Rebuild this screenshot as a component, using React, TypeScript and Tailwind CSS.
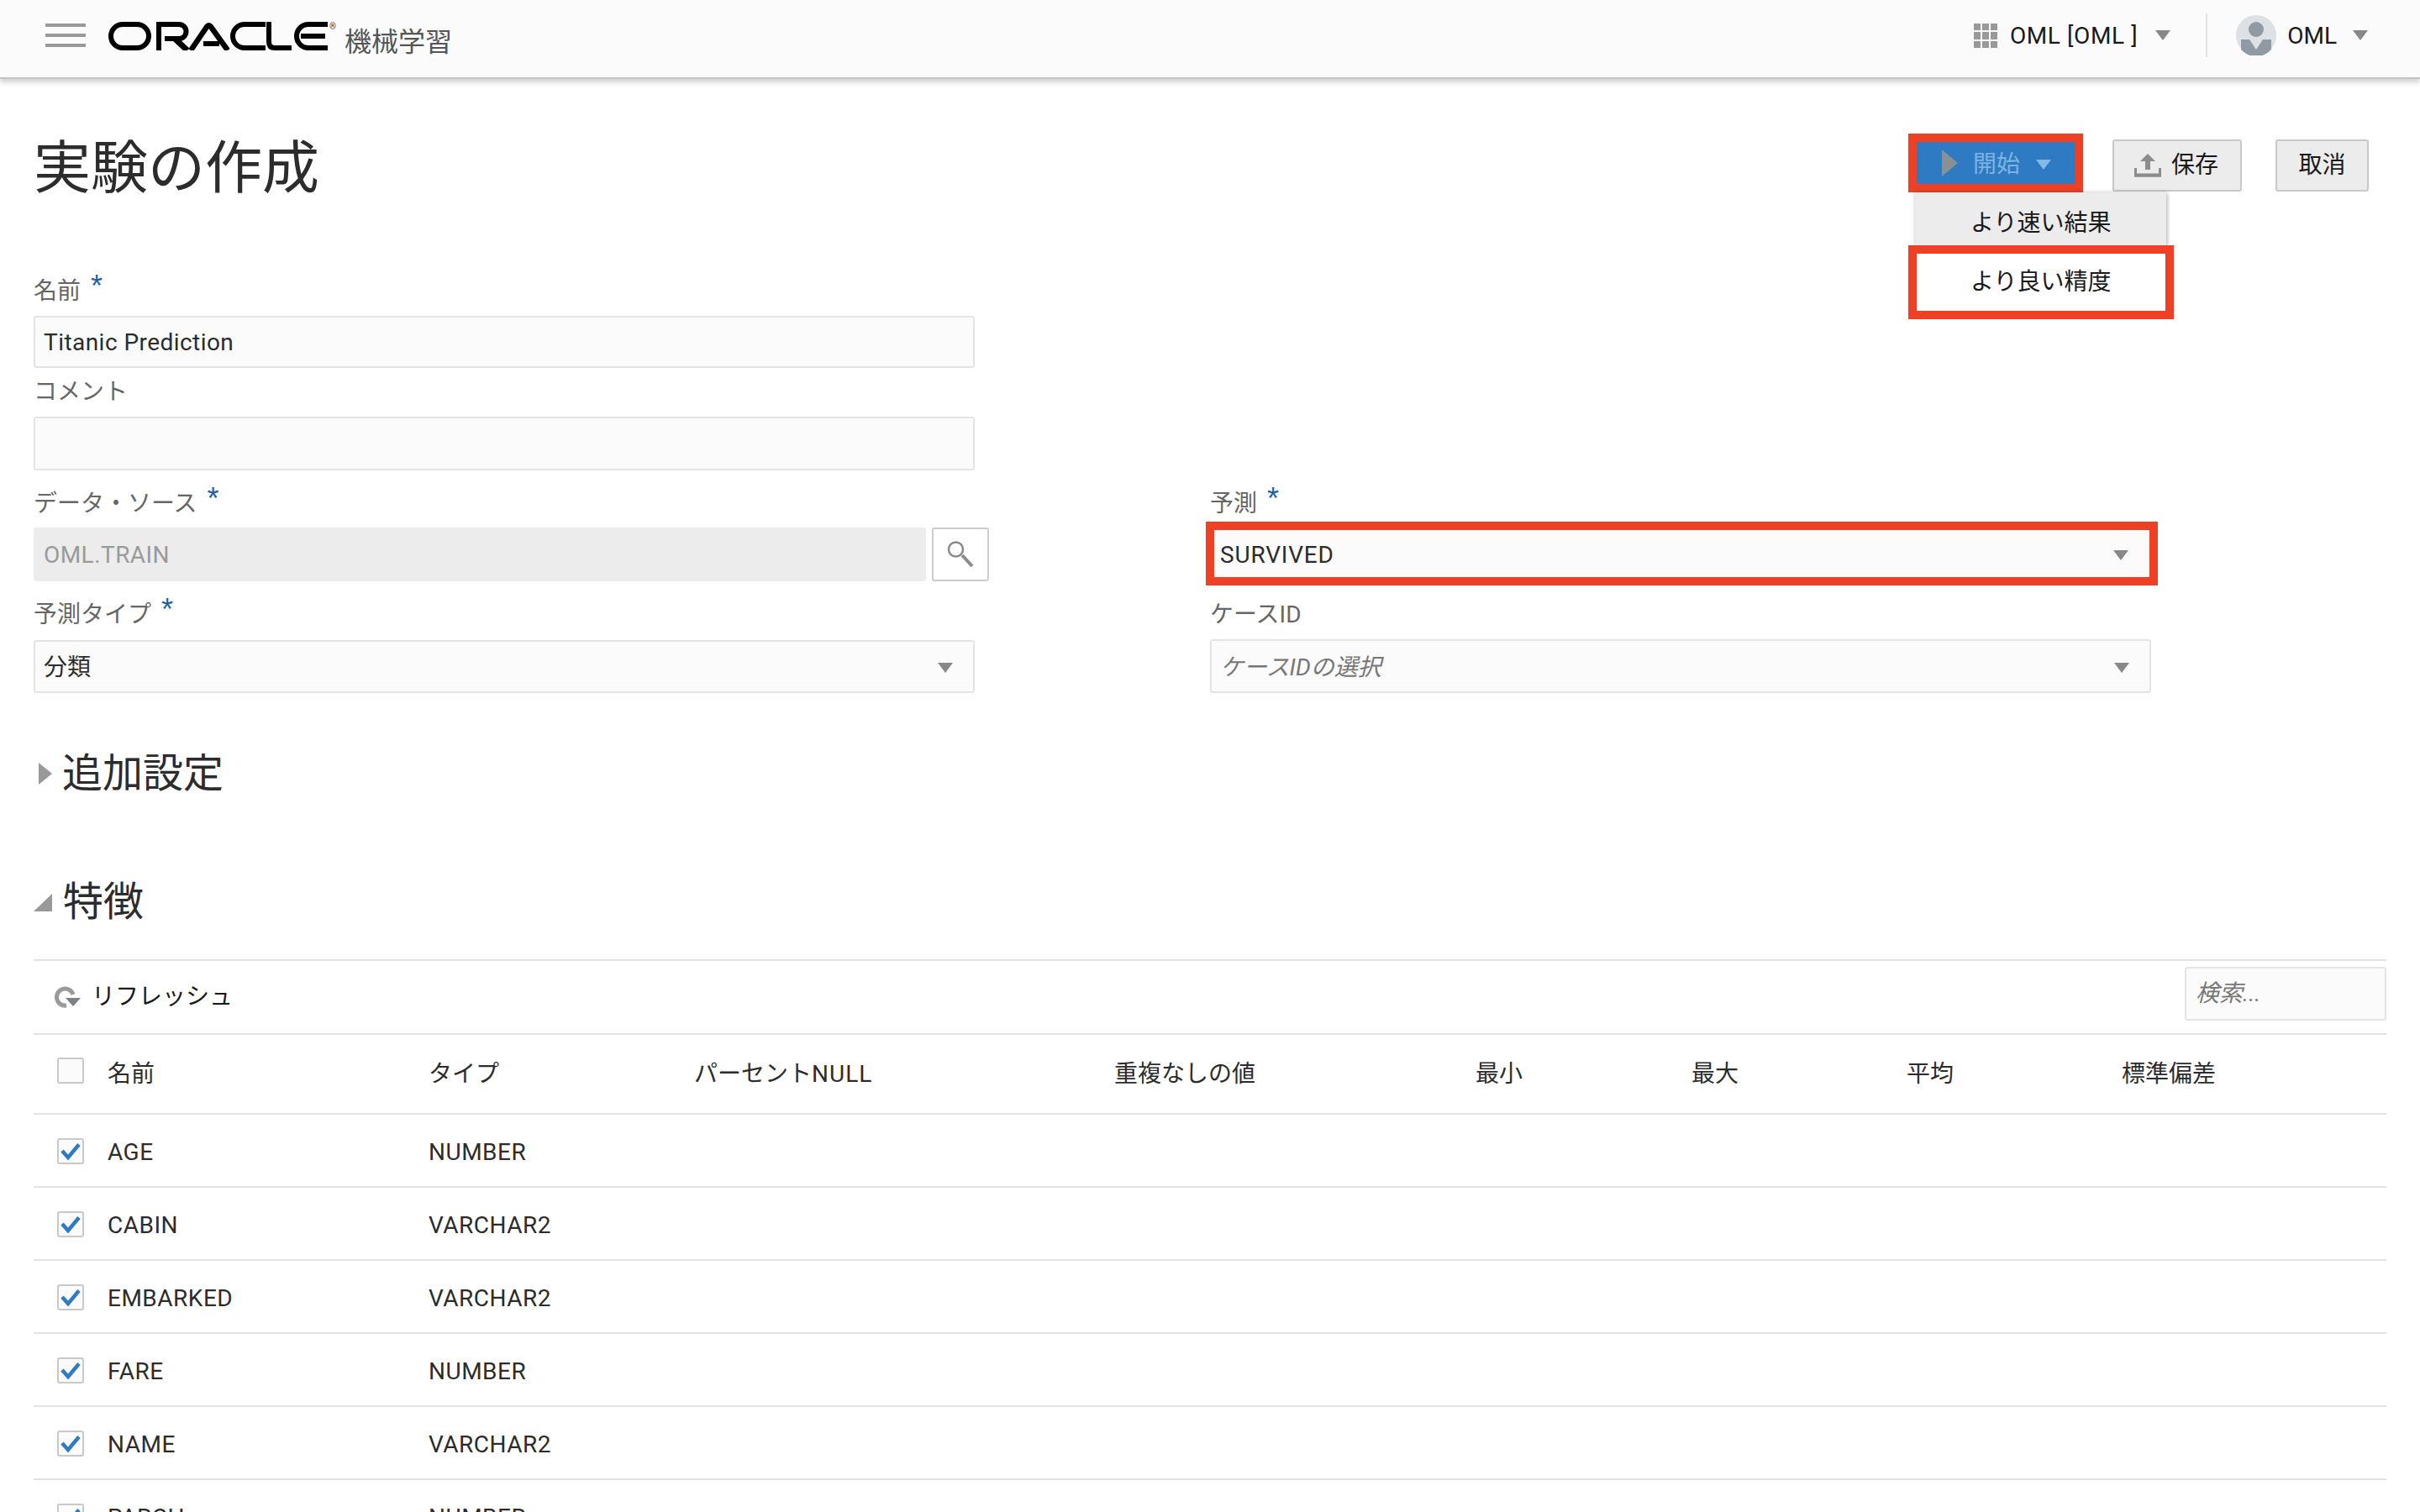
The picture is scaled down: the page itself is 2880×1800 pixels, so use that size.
const font = "font-['Roboto','Noto_Sans_CJK_JP',sans-serif]";

const rows = [
  ["AGE", "NUMBER"],
  ["CABIN", "VARCHAR2"],
  ["EMBARKED", "VARCHAR2"],
  ["FARE", "NUMBER"],
  ["NAME", "VARCHAR2"],
  ["PARCH", "NUMBER"],
];

const Caret = ({ color = "#888888" }: { color?: string }) => (
  <svg width="18" height="12" viewBox="0 0 18 12" className="shrink-0">
    <polygon points="0,0 18,0 9,12" fill={color} />
  </svg>
);

const Star = () => (
  <span className="-mt-[6px] ml-[12px] font-['Liberation_Sans',sans-serif] text-[36px] leading-[36px] text-[#1f5fa8]">
    *
  </span>
);

const OracleLogo = () => (
  <svg width="261" height="34" viewBox="0 0 261 34" fill="none" stroke="#000" strokeWidth="6">
    <rect x="3" y="3" width="45" height="28" rx="14" />
    <path d="M60 34V3H84a8.5 8.5 0 0 1 0 17H67" />
    <path d="M79 20L94 34" strokeWidth="7" />
    <path d="M98 34L117 6Q119.5 2.5 122 6L142 34" strokeWidth="6.5" />
    <path d="M113 26H132" />
    <path d="M187 3H162a14 14 0 0 0 0 28H187" />
    <path d="M191 0V24q0 7 7 7H218" />
    <path d="M261 3H238a14 14 0 0 0 0 28H261" />
    <path d="M229 17H258" />
  </svg>
);

const Check = ({ checked = true }: { checked?: boolean }) => (
  <div className="flex h-[31px] w-[32px] items-center justify-center rounded-[3px] border-2 border-[#c9c9c9] bg-[#fbfbfb]">
    {checked && (
      <svg width="24" height="20" viewBox="0 0 24 20" fill="none" className="shrink-0">
        <path d="M2 9L9 17L22 1.5" stroke="#2e7bc4" strokeWidth="4.5" />
      </svg>
    )}
  </div>
);

const Label = ({ className, text, star }: { className: string; text: string; star?: boolean }) => (
  <div className={`flex items-end text-[28px] leading-[36px] text-[#666666] ${className}`}>
    <div className="flex">
      <span>{text}</span>
      {star && <Star />}
    </div>
  </div>
);

const Field = ({ className, children }: { className: string; children?: React.ReactNode }) => (
  <div
    className={`flex items-center justify-between rounded-[3px] border-2 border-[#e4e4e4] bg-[#fbfbfb] pl-[10px] pr-[24px] pt-[2px] text-[28px] text-[#2c2c2c] ${className}`}
  >
    {children}
  </div>
);

export default function App() {
  return (
    <div className={`h-[1800px] w-[2880px] overflow-hidden bg-white ${font}`}>
      <header className="flex h-[94px] items-center justify-between border-b-2 border-[#c4c4c4] bg-[#fbfbfb] pl-[54px] pr-[62px] shadow-[0_4px_6px_rgba(0,0,0,0.18)]">
        <div className="flex items-center">
          <div className="flex w-[48px] flex-col gap-[8px] pb-[8px]">
            <div className="h-[4px] bg-[#999999]" />
            <div className="h-[4px] bg-[#999999]" />
            <div className="h-[4px] bg-[#999999]" />
          </div>
          <div className="ml-[27px] flex items-start pb-[6px]">
            <OracleLogo />
            <span className="ml-[2px] text-[10px] leading-[12px] text-[#333]">®</span>
          </div>
          <span className="ml-[10px] mt-[8px] text-[32px] leading-[40px] text-[#555555]">機械学習</span>
        </div>
        <div className="flex items-center pb-[8px] text-[28px] leading-[36px] text-[#1a1a1a]">
          <svg width="28" height="29" viewBox="0 0 28 29" fill="#999999">
            <rect x="0" y="0" width="8" height="8" />
            <rect x="10" y="0" width="8" height="8" />
            <rect x="20" y="0" width="8" height="8" />
            <rect x="0" y="10" width="8" height="9" />
            <rect x="10" y="10" width="8" height="9" />
            <rect x="20" y="10" width="8" height="9" />
            <rect x="0" y="21" width="8" height="8" />
            <rect x="10" y="21" width="8" height="8" />
            <rect x="20" y="21" width="8" height="8" />
          </svg>
          <span className="ml-[15px] pt-[2px] tracking-[0.6px]">OML [OML ]</span>
          <span className="ml-[21px]">
            <Caret />
          </span>
          <div className="ml-[42px] h-[52px] w-[2px] bg-[#e2e2e2]" />
          <svg width="48" height="48" viewBox="0 0 48 48" className="ml-[34px]">
            <circle cx="24" cy="24" r="24" fill="#dde0e4" />
            <circle cx="24" cy="17" r="9" fill="#8f9aa5" />
            <path d="M6 29H16L24 41L32 29H42V41A24 24 0 0 1 6 41Z" fill="#8f9aa5" />
          </svg>
          <span className="ml-[13px] pt-[2px]">OML</span>
          <span className="ml-[19px]">
            <Caret />
          </span>
        </div>
      </header>

      <main className="px-[40px]">
        <div className="flex h-[220px] items-start justify-between">
          <h1 className="mt-[67px] text-[68px] font-normal leading-[80px] text-[#2c2c2c]">実験の作成</h1>
          <div className="mr-[21px] mt-[65px] flex items-start text-[28px] text-[#1a1a1a]">
            <div className="relative">
              <div className="flex h-[70px] w-[208px] items-center border-[10px] border-[#ed4024] bg-[#2e7bc4] pl-[30px] text-[#7db3e0]">
                <svg width="19" height="32" viewBox="0 0 19 32">
                  <polygon points="0,0 19,16 0,32" fill="#8a8f94" />
                </svg>
                <span className="ml-[18px] pt-[4px]">開始</span>
                <span className="ml-[19px] pt-[4px]">
                  <Caret color="#82bbe5" />
                </span>
              </div>
              <div className="absolute left-[8px] top-[70px] w-[299px] bg-[#ececec] shadow-[1px_1px_5px_rgba(0,0,0,0.35)]">
                <div className="flex h-[63px] items-center pl-[66px] pt-[10px]">より速い結果</div>
              </div>
              <div className="absolute left-0 top-[133px] flex h-[88px] w-[316px] items-center border-[10px] border-[#ed4024] bg-white pl-[64px]">
                より良い精度
              </div>
            </div>
            <button className="ml-[35px] mt-[7px] flex h-[62px] w-[154px] items-center rounded-[3px] border-2 border-[#c8c8c8] bg-[#ececec] pl-[24px]">
              <svg width="32" height="28" viewBox="0 0 32 28" fill="none">
                <path d="M16 8V19" stroke="#8c8c8c" strokeWidth="6" />
                <polygon points="16,0 25,9 7,9" fill="#8c8c8c" />
                <path d="M1.5 17V26H30.5V17" stroke="#8c8c8c" strokeWidth="3" />
                <path d="M0 25.5H32" stroke="#8c8c8c" strokeWidth="4" />
              </svg>
              <span className="ml-[12px]">保存</span>
            </button>
            <button className="ml-[40px] mt-[7px] flex h-[62px] w-[111px] items-center justify-center rounded-[3px] border-2 border-[#c8c8c8] bg-[#ececec]">
              取消
            </button>
          </div>
        </div>

        <div className="flex h-[511px] items-end">
          <div className="w-[1137px]">
            <Label className="h-[62px] pb-[11px]" text="名前" star />
            <Field className="h-[62px] w-[1120px] tracking-[0.45px]">Titanic Prediction</Field>
            <Label className="h-[58px] pb-[11px]" text="コメント" />
            <Field className="h-[64px] w-[1120px]" />
            <Label className="h-[68px] pb-[10px]" text="データ・ソース" star />
            <div className="flex h-[64px] gap-[7px]">
              <div className="flex w-[1064px] items-center rounded-[3px] bg-[#ececec] pl-[12px] pt-[2px] text-[28px] tracking-[0.45px] text-[#9a9a9a]">
                OML.TRAIN
              </div>
              <div className="flex w-[68px] items-center justify-center rounded-[3px] border-2 border-[#cccccc] bg-white">
                <svg width="34" height="34" viewBox="0 0 34 34" fill="none">
                  <circle cx="11.5" cy="11" r="8.5" stroke="#8a8a8a" strokeWidth="2.5" />
                  <path d="M19 18L31 31" stroke="#8a8a8a" strokeWidth="4" />
                </svg>
              </div>
            </div>
            <Label className="h-[70px] pb-[12px]" text="予測タイプ" star />
            <Field className="h-[63px] w-[1120px]">
              分類
              <Caret />
            </Field>
          </div>
          <div className="ml-[258px] w-[1133px]">
            <Label className="h-[62px] pb-[3px] pl-[5px]" text="予測" star />
            <div className="flex h-[76px] items-center justify-between border-[10px] border-[#ed4024] bg-[#fbfbfb] pl-[7px] pr-[25px] pt-[4px] text-[28px] tracking-[0.8px] text-[#2c2c2c]">
              SURVIVED
              <Caret />
            </div>
            <Label className="h-[64px] pb-[11px] pl-[5px]" text="ケースID" />
            <Field className="ml-[5px] h-[64px] w-[1120px] pt-[4px] italic text-[#777777]">
              ケースIDの選択
              <span className="not-italic">
                <Caret />
              </span>
            </Field>
          </div>
        </div>

        <div className="mt-[58px] flex h-[76px] items-center text-[48px] leading-[60px] text-[#2c2c2c]">
          <svg width="16" height="26" viewBox="0 0 16 26" className="ml-[6px]">
            <polygon points="0,0 16,13 0,26" fill="#999999" />
          </svg>
          <span className="ml-[12px]">追加設定</span>
        </div>
        <div className="mt-[77px] flex h-[76px] items-center text-[48px] leading-[60px] text-[#2c2c2c]">
          <svg width="22" height="21" viewBox="0 0 22 21">
            <polygon points="22,0 22,21 0,21" fill="#999999" />
          </svg>
          <span className="ml-[13px]">特徴</span>
        </div>

        <div className="mt-[30px] flex h-[90px] items-center justify-between border-y-2 border-[#e2e2e2]">
          <div className="ml-[23px] flex items-center text-[28px] text-[#1a1a1a]">
            <svg width="34" height="28" viewBox="0 0 34 28" fill="none">
              <path d="M24 11A10 10 0 1 0 16 24" stroke="#9a9a9a" strokeWidth="5" />
              <polygon points="15,15 33,15 24,25" fill="#7d8287" />
            </svg>
            <span className="ml-[12px]">リフレッシュ</span>
          </div>
          <div className="mb-[9px] flex h-[64px] w-[240px] items-center rounded-[3px] border-2 border-[#e4e4e4] bg-[#fbfbfb] pl-[11px] text-[28px] italic text-[#777777]">
            検索...
          </div>
        </div>

        <div className="flex h-[95px] items-center border-b-2 border-[#e2e2e2] text-[28px] text-[#2c2c2c]">
          <div className="mb-[8px] ml-[28px] w-[60px]">
            <Check checked={false} />
          </div>
          <span className="w-[382px]">名前</span>
          <span className="w-[316px]">タイプ</span>
          <span className="w-[500px]">
            パーセント<span className="tracking-[1px]">NULL</span>
          </span>
          <span className="w-[430px]">重複なしの値</span>
          <span className="w-[257px]">最小</span>
          <span className="w-[256px]">最大</span>
          <span className="w-[256px]">平均</span>
          <span>標準偏差</span>
        </div>

        {rows.map(([name, type]) => (
          <div
            key={name}
            className="flex h-[87px] items-center border-b-2 border-[#e2e2e2] pt-[2px] text-[28px] tracking-[0.5px] text-[#2c2c2c]"
          >
            <div className="ml-[28px] w-[60px]">
              <Check />
            </div>
            <span className="w-[382px] pt-[2px]">{name}</span>
            <span className="pt-[2px]">{type}</span>
          </div>
        ))}
      </main>
    </div>
  );
}
